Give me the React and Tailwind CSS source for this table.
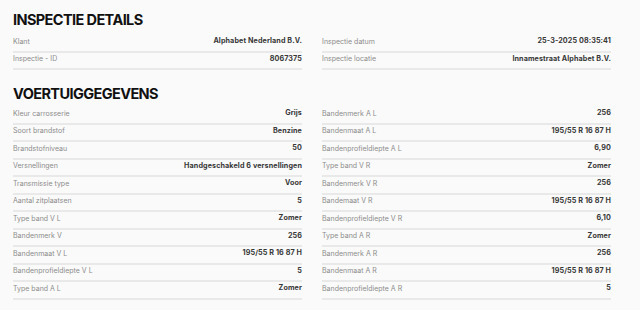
import React from "react";

const inspLeft = [
  ["Klant", "Alphabet Nederland B.V."],
  ["Inspectie - ID", "8067375"],
];
const inspRight = [
  ["Inspectie datum", "25-3-2025 08:35:41"],
  ["Inspectie locatie", "Innamestraat Alphabet B.V."],
];
const vLeft = [
  ["Kleur carrosserie", "Grijs"],
  ["Soort brandstof", "Benzine"],
  ["Brandstofniveau", "50"],
  ["Versnellingen", "Handgeschakeld 6 versnellingen"],
  ["Transmissie type", "Voor"],
  ["Aantal zitplaatsen", "5"],
  ["Type band V L", "Zomer"],
  ["Bandenmerk V", "256"],
  ["Bandenmaat V L", "195/55 R 16 87 H"],
  ["Bandenprofieldiepte V L", "5"],
  ["Type band A L", "Zomer"],
];
const vRight = [
  ["Bandenmerk A L", "256"],
  ["Bandenmaat A L", "195/55 R 16 87 H"],
  ["Bandenprofieldiepte A L", "6,90"],
  ["Type band V R", "Zomer"],
  ["Bandenmerk V R", "256"],
  ["Bandemaat V R", "195/55 R 16 87 H"],
  ["Bandenprofieldiepte V R", "6,10"],
  ["Type band A R", "Zomer"],
  ["Bandenmerk A R", "256"],
  ["Bandenmaat A R", "195/55 R 16 87 H"],
  ["Bandenprofieldiepte A R", "5"],
];

function Row({ label, value }) {
  return (
    <div className="flex h-[17.5px] items-center justify-between border-b-2 border-[#e9e9e9] pb-[2px]">
      <span className="text-[7px] text-[#8c8c8c]">{label}</span>
      <span className="text-[7.2px] font-bold tracking-[0.1px] text-[#383838]">{value}</span>
    </div>
  );
}

function Col({ rows }) {
  return (
    <div className="flex flex-col">
      {rows.map(([l, v]) => (
        <Row key={l} label={l} value={v} />
      ))}
    </div>
  );
}

export default function App() {
  return (
    <div
      className="h-[310px] w-[640px] bg-[#fafafa] pl-[13px] pr-[29px] pt-[10px]"
      style={{ fontFamily: "Inter, 'Noto Sans', sans-serif" }}
    >
      <h1 className="text-[14.5px] font-bold leading-[20px] tracking-[-0.6px] text-[#111]">
        INSPECTIE DETAILS
      </h1>
      <div className="mt-[5px] grid grid-cols-2 gap-x-[20px]">
        <Col rows={inspLeft} />
        <Col rows={inspRight} />
      </div>
      <h2 className="mt-[14px] text-[14.5px] font-bold leading-[20px] tracking-[-0.6px] text-[#111]">
        VOERTUIGGEGEVENS
      </h2>
      <div className="mt-[3px] grid grid-cols-2 gap-x-[20px]">
        <Col rows={vLeft} />
        <Col rows={vRight} />
      </div>
    </div>
  );
}
